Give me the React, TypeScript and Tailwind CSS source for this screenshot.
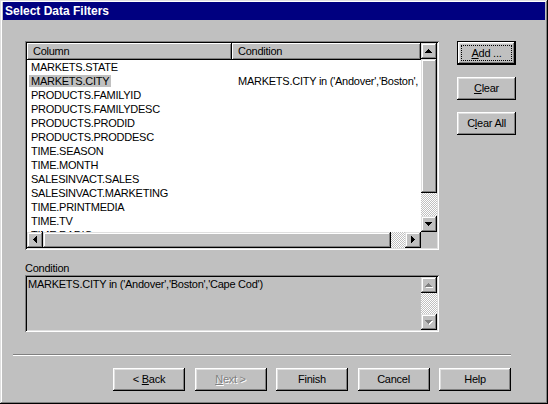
import type { ReactNode } from "react";

const raised =
  "shadow-[inset_-1px_-1px_#000,inset_1px_1px_#fff,inset_-2px_-2px_#808080,inset_2px_2px_#dfdfdf]";
const barBtn =
  "shadow-[inset_-1px_-1px_#000,inset_1px_1px_#dfdfdf,inset_-2px_-2px_#808080,inset_2px_2px_#fff]";
const headerCell =
  "shadow-[inset_-1px_-1px_#000,inset_1px_1px_#fff,inset_-2px_-2px_#808080]";
const sunken =
  "shadow-[inset_1px_1px_#808080,inset_-1px_-1px_#fff,inset_2px_2px_#000,inset_-2px_-2px_#dfdfdf]";
const dither =
  "bg-[image:repeating-conic-gradient(#c0c0c0_0_25%,#fff_0_50%)] bg-[length:2px_2px]";

const columns = [
  "MARKETS.STATE",
  "MARKETS.CITY",
  "PRODUCTS.FAMILYID",
  "PRODUCTS.FAMILYDESC",
  "PRODUCTS.PRODID",
  "PRODUCTS.PRODDESC",
  "TIME.SEASON",
  "TIME.MONTH",
  "SALESINVACT.SALES",
  "SALESINVACT.MARKETING",
  "TIME.PRINTMEDIA",
  "TIME.TV",
  "TIME.RADIO",
];

const arrows = {
  up: { w: 7, h: 4, d: "M3 0h1v1h1v1h1v1h1v1H0V3h1V2h1V1h1z" },
  down: { w: 7, h: 4, d: "M0 0h7v1H6v1H5v1H4v1H3V3H2V2H1V1H0z" },
  left: { w: 4, h: 7, d: "M3 0h1v7H3V6H2V5H1V4H0V3h1V2h1V1h1z" },
  right: { w: 4, h: 7, d: "M0 0h1v1h1v1h1v1h1v1H3v1H2v1H1v1H0z" },
};

function ScrollButton({
  dir,
  disabled = false,
}: {
  dir: keyof typeof arrows;
  disabled?: boolean;
}) {
  const a = arrows[dir];
  return (
    <div
      className={`flex h-[16px] w-[16px] shrink-0 items-center justify-center bg-[#c0c0c0] ${barBtn}`}
    >
      <svg
        width={a.w + 1}
        height={a.h + 1}
        viewBox={`0 0 ${a.w + 1} ${a.h + 1}`}
        shapeRendering="crispEdges"
      >
        {disabled && <path d={a.d} fill="#fff" transform="translate(1 1)" />}
        <path d={a.d} fill={disabled ? "#808080" : "#000"} />
      </svg>
    </div>
  );
}

function Button({
  children,
  isDefault = false,
  className = "",
}: {
  children: ReactNode;
  isDefault?: boolean;
  className?: string;
}) {
  if (isDefault) {
    return (
      <div className={`border border-black bg-[#c0c0c0] ${className}`}>
        <div className={`flex h-full w-full p-[3px] ${raised}`}>
          <span className="flex flex-1 items-center justify-center border border-dotted border-black">
            {children}
          </span>
        </div>
      </div>
    );
  }
  return (
    <div
      className={`flex items-center justify-center bg-[#c0c0c0] ${raised} ${className}`}
    >
      {children}
    </div>
  );
}

export default function App() {
  return (
    <div
      className={`flex h-[404px] w-[548px] flex-col bg-[#c0c0c0] px-[3px] pt-[2px] font-['Liberation_Sans',Arial,sans-serif] text-[11px] tracking-[-0.25px] text-black shadow-[inset_-1px_-1px_#000,inset_1px_1px_#dfdfdf,inset_-2px_-2px_#808080,inset_2px_2px_#fff]`}
    >
      <div className="h-[18px] bg-[#000080] px-[2px] text-[12px] font-bold leading-[18px] tracking-normal text-white">
        Select Data Filters
      </div>

      <div className="mt-[21px] flex pl-[22px]">
        <div className="flex w-[414px] flex-col">
          <div className={`flex h-[209px] flex-col bg-white p-[2px] ${sunken}`}>
            <div className="flex min-h-0 flex-1">
              <div className="flex min-w-0 flex-1 flex-col overflow-hidden">
                <div className="flex h-[17px] shrink-0 leading-[17px]">
                  <div className={`w-[205px] shrink-0 bg-[#c0c0c0] pl-[6px] ${headerCell}`}>
                    Column
                  </div>
                  <div className={`flex-1 bg-[#c0c0c0] pl-[6px] ${headerCell}`}>
                    Condition
                  </div>
                </div>
                {columns.map((c) => (
                  <div key={c} className="flex h-[14px] shrink-0 leading-[14px]">
                    <div className="w-[205px] shrink-0 pl-[2px]">
                      <span
                        className={`px-[2px] ${c === "MARKETS.CITY" ? "bg-[#c0c0c0]" : ""}`}
                      >
                        {c}
                      </span>
                    </div>
                    <div className="min-w-0 flex-1 whitespace-nowrap pl-[6px]">
                      {c === "MARKETS.CITY" ? "MARKETS.CITY in ('Andover','Boston'," : ""}
                    </div>
                  </div>
                ))}
              </div>
              <div className="flex w-[16px] flex-col">
                <ScrollButton dir="up" />
                <div className={`h-[134px] shrink-0 bg-[#c0c0c0] ${barBtn}`} />
                <div className={`flex-1 ${dither}`} />
                <ScrollButton dir="down" />
              </div>
            </div>
            <div className="flex h-[16px] shrink-0">
              <ScrollButton dir="left" />
              <div className={`w-[348px] shrink-0 bg-[#c0c0c0] ${barBtn}`} />
              <div className={`flex-1 ${dither}`} />
              <ScrollButton dir="right" />
              <div className="w-[16px] bg-[#c0c0c0]" />
            </div>
          </div>

          <div className="mt-[11px] h-[14px] leading-[14px]">Condition</div>

          <div className={`flex h-[57px] bg-[#c0c0c0] p-[2px] ${sunken}`}>
            <div className="flex-1 whitespace-nowrap pl-[1px] leading-[14px]">
              MARKETS.CITY in ('Andover','Boston','Cape Cod')
            </div>
            <div className="flex w-[16px] flex-col">
              <ScrollButton dir="up" disabled />
              <div className={`flex-1 ${dither}`} />
              <ScrollButton dir="down" disabled />
            </div>
          </div>
        </div>

        <div className="ml-[18px] flex flex-col gap-[12px]">
          <Button isDefault className="h-[24px] w-[59px]">
            <span>
              <span className="underline">A</span>dd ...
            </span>
          </Button>
          <Button className="h-[23px] w-[59px]">
            <span>
              <span className="underline">C</span>lear
            </span>
          </Button>
          <Button className="h-[23px] w-[59px]">
            <span>
              C<span className="underline">l</span>ear All
            </span>
          </Button>
        </div>
      </div>

      <div className="mt-[22px] ml-[10px] h-[2px] w-[498px] border-t border-b border-t-[#808080] border-b-white" />

      <div className="mt-[12px] ml-[10px] flex w-[498px] justify-end gap-[9.5px]">
        <Button className="h-[23px] w-[72px]">
          <span>
            &lt; <span className="underline">B</span>ack
          </span>
        </Button>
        <Button className="h-[23px] w-[72px]">
          <span className="text-[#808080] [text-shadow:1px_1px_0_#fff]">
            <span className="underline">N</span>ext &gt;
          </span>
        </Button>
        <Button className="h-[23px] w-[72px]">Finish</Button>
        <Button className="h-[23px] w-[72px]">Cancel</Button>
        <Button className="h-[23px] w-[72px]">Help</Button>
      </div>
    </div>
  );
}
